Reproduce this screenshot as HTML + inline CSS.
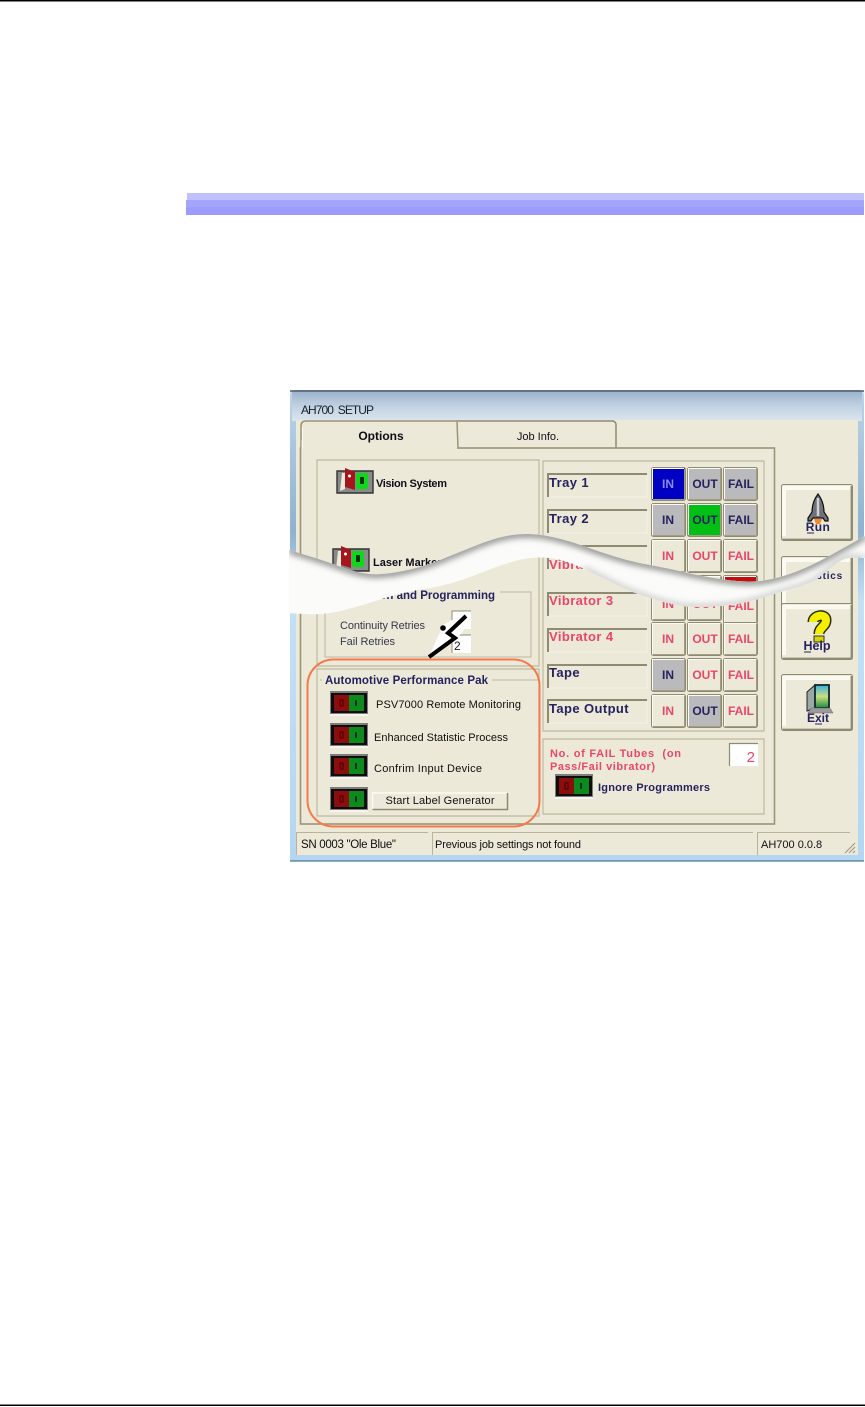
<!DOCTYPE html>
<html><head><meta charset="utf-8"><style>
html,body{margin:0;padding:0;background:#fff;width:865px;height:1407px;overflow:hidden}
svg{position:absolute;left:0;top:0;display:block}
text{font-family:"Liberation Sans",sans-serif}
.n{font-weight:bold;fill:#25225e}
.r{font-weight:bold;fill:#e8466a}
.c{text-anchor:middle;font-weight:bold;font-size:12px}
.t{font-size:11px;fill:#111}
</style></head><body>
<svg width="865" height="1407" viewBox="0 0 865 1407" xmlns="http://www.w3.org/2000/svg">
<defs>
<linearGradient id="tb" x1="0" y1="0" x2="0" y2="1"><stop offset="0" stop-color="#9cb4cf"/><stop offset=".5" stop-color="#c3d2e2"/><stop offset="1" stop-color="#dbe5ee"/></linearGradient>
<linearGradient id="sd" x1="0" y1="0" x2="0" y2="1"><stop offset="0" stop-color="#bcd3e8"/><stop offset=".3" stop-color="#8fb2cf"/><stop offset=".45" stop-color="#c4e0f4"/><stop offset="1" stop-color="#b4d6f2"/></linearGradient>
<linearGradient id="dr" x1="0" y1="0" x2="0" y2="1"><stop offset="0" stop-color="#3ab0e0"/><stop offset=".5" stop-color="#c8e080"/><stop offset="1" stop-color="#1f8a40"/></linearGradient>
<g id="b"><rect x=".5" y=".5" width="34" height="33" rx="2" stroke="#8f8a72" stroke-width="1"/><path d="M1.5 32V1.5H33" fill="none" stroke="#fbfaf4" stroke-width="1"/><path d="M2 32.5H33.5V2" fill="none" stroke="#a39d84" stroke-width="1"/></g>
<g id="big"><rect x=".5" y=".5" width="71" height="56" rx="2" fill="#ece9d8" stroke="#8f8a72"/><path d="M3 52V4H69" fill="none" stroke="#faf9f2" stroke-width="4"/><path d="M1.500 55.500H70.500V2" fill="none" stroke="#8f8a72" stroke-width="1.800"/></g>
<g id="lab"><path d="M1 24V1H100" fill="none" stroke="#8f8a72" stroke-width="2"/><path d="M2 24H100V3" fill="none" stroke="#f4f2e8" stroke-width="1"/></g>
<g id="tog"><rect x="0" y="-1" width="38" height="23" fill="#7d7d7d"/><rect x="1" y="1" width="36" height="20" fill="#111"/><rect x="4" y="3" width="15" height="16" fill="#8c0e0e"/><rect x="19" y="3" width="15" height="16" fill="#0b8a1e"/><rect x="10" y="8" width="3" height="6" fill="none" stroke="#4a0505"/><rect x="25" y="8" width="2" height="6" fill="#033"/><path d="M0 23H38" stroke="#fff"/></g>
<g id="togo"><path d="M0 2H36V24H0Z" fill="#8a8a8a" stroke="#333" stroke-width="1.400"/><path d="M3 22L5 4H8V20Z" fill="#ece9d8"/><path d="M8 -1L18 3V21L8 18Z" fill="#a5141c"/><circle cx="12.500" cy="7" r="1.500" fill="#fff"/><rect x="19" y="4" width="12" height="16" fill="#0bd81e"/><rect x="23" y="8" width="4" height="7" fill="#030"/></g>
<clipPath id="wc"><path id="wp" d="M289 550Q323 560 340 566.500Q357 573 370 574Q383 575 403 571Q423 567 440 560Q457 553 478.500 544.500Q500 536 516.500 534.500Q533 533 550 536.500Q567 540 583.500 546Q600 552 616.500 557Q633 562 650 565Q667 568 683.500 572Q700 576 723.500 579.500Q747 583 763.500 580.500Q780 578 796.500 571.500Q813 565 830 555.500Q847 546 865 536L865 558Q847 556 838.500 562Q830 568 821.500 575.500Q813 583 796.500 587.500Q780 592 763.500 597.500Q747 603 730 605Q713 607 696.500 607Q680 607 656.500 600Q633 593 616.500 585Q600 577 583.500 568.500Q567 560 550 558Q533 556 516.500 560.500Q500 565 475 575Q450 585 426.500 588.500Q403 592 380 599.500Q357 607 340 611Q323 615 306 614L289 613Z"/></clipPath>
<clipPath id="dg"><rect x="813" y="560" width="35" height="30"/></clipPath>
<filter id="bl" x="-10%" y="-30%" width="120%" height="160%"><feGaussianBlur stdDeviation="3.500"/></filter>
<filter id="sf"><feGaussianBlur stdDeviation=".28"/></filter>
</defs>
<rect width="865" height="1407" fill="#fff"/>
<rect x="0" y="0" width="865" height="1.500" fill="#000"/>
<rect x="0" y="1404.500" width="865" height="1.500" fill="#000"/>
<rect x="187" y="193" width="677" height="7" fill="#c0c0ff"/>
<rect x="186" y="200" width="678" height="7" fill="#a4a4fb"/>
<rect x="186" y="207" width="678" height="8" fill="#9c9cff"/>

<g filter="url(#sf)">
<path d="M290 861V395Q290 390 295 390H859Q864 390 864 395V861Z" fill="url(#sd)"/>
<path d="M290 391H864" stroke="#2c3a44" stroke-width="1.300"/>
<path d="M290 861H864" stroke="#1c5f70" stroke-width="1"/>
<rect x="292" y="392" width="570" height="29" fill="url(#tb)"/>
<text x="301" y="414" font-size="12" fill="#14202c" textLength="73" xml:space="preserve">AH700  SETUP</text>
<rect x="296" y="420" width="562" height="435" fill="#ece9d8"/>

<path d="M457 448V421H612Q616 421 616 425V448" fill="#ece9d8" stroke="#8f8a72" stroke-width="1.500"/>
<rect x="300.500" y="448" width="474" height="376" fill="#ece9d8" stroke="#9a9478" stroke-width="1.600"/>
<path d="M301 448V426Q301 421 306 421H458V448" fill="#ece9d8"/>
<path d="M301 448V426Q301 421 306 421H457L458 448" fill="none" stroke="#9a9478" stroke-width="1.500"/>
<rect x="301.500" y="440" width="155.500" height="12" fill="#ece9d8"/>
<path d="M302.500 449V427" stroke="#f9f8f0"/>
<text x="381" y="440" text-anchor="middle" font-size="12" font-weight="bold" fill="#111118">Options</text>
<text x="538" y="440" text-anchor="middle" font-size="11" fill="#111118">Job Info.</text>

<path d="M317 666V460H539V666Z" fill="none" stroke="#bdb89e" stroke-width="1.200"/>
<path d="M543 731V461H764V731Z" fill="none" stroke="#bdb89e" stroke-width="1.200"/>
<path d="M543 814V739H764V814Z" fill="none" stroke="#bdb89e" stroke-width="1.200"/>
<path d="M317 816V669H539V816Z" fill="none" stroke="#bdb89e" stroke-width="1.200"/>

<use href="#togo" x="337" y="469"/>
<text x="376" y="487" font-size="11" class="n" style="fill:#10101c" textLength="71">Vision System</text>
<use href="#togo" x="333" y="547"/>
<text x="373" y="566" font-size="11" class="n" style="fill:#10101c">Laser Marker</text>

<rect x="325" y="592" width="206" height="65" fill="none" stroke="#bdb89e"/>
<rect x="400" y="588" width="100" height="10" fill="#ece9d8"/>
<text x="495" y="599" text-anchor="end" font-size="11.500" class="n">Vision and Programming</text>
<text x="340" y="629" font-size="11" fill="#38374e" textLength="85">Continuity Retries</text>
<text x="340" y="645" font-size="11" fill="#38374e" textLength="55">Fail Retries</text>
<rect x="452" y="611" width="19" height="18" fill="#fff"/><path d="M452 629V611H471" fill="none" stroke="#8f8a72"/>
<rect x="452" y="635" width="19" height="18" fill="#fff"/><path d="M452 653V635H471" fill="none" stroke="#8f8a72"/>
<text x="454" y="626" font-size="12" fill="#333">1</text>
<text x="454" y="650" font-size="12" fill="#222">2</text>

<path d="M429 657L443 625L468 611L470 622L456 640Z" fill="#fff"/>
<path d="M429 657L455 638L448 633L466 616" fill="none" stroke="#000" stroke-width="4"/>
<circle cx="443" cy="628" r="2.800" fill="#000"/>

<path d="M320 680H538" stroke="#bdb89e"/>
<rect x="322" y="672" width="170" height="14" fill="#ece9d8"/>
<text x="325" y="684" font-size="11.500" class="n" textLength="163">Automotive Performance Pak</text>
<use href="#tog" x="330" y="692"/>
<use href="#tog" x="330" y="724"/>
<use href="#tog" x="330" y="755"/>
<use href="#tog" x="330" y="788"/>
<text x="376" y="708" class="t" textLength="145">PSV7000 Remote Monitoring</text>
<text x="374" y="741" class="t" textLength="134">Enhanced Statistic Process</text>
<text x="374" y="772" class="t" textLength="108">Confrim Input Device</text>
<rect x="372.500" y="793" width="135" height="16.500" fill="#ece9d8"/>
<path d="M372.500 809V793H507" fill="none" stroke="#fbfaf4" stroke-width="1.500"/>
<path d="M372.500 809.500H507.500V793" fill="none" stroke="#8f8a72" stroke-width="1.500"/>
<text x="440" y="804" text-anchor="middle" font-size="11" fill="#111" textLength="109">Start Label Generator</text>
<rect x="307.500" y="659.500" width="232" height="167" rx="26" fill="none" stroke="#f47a4c" stroke-width="2"/>

<use href="#lab" x="547" y="473"/><text x="549" y="487" font-size="13" class="n" letter-spacing=".4">Tray 1</text>
<use href="#lab" x="547" y="509"/><text x="549" y="523" font-size="13" class="n" letter-spacing=".4">Tray 2</text>
<use href="#lab" x="547" y="545"/><text x="549" y="569" font-size="13" class="r" letter-spacing=".4">Vibrator 1</text>
<use href="#lab" x="547" y="592"/><text x="549" y="605" font-size="13" class="r" letter-spacing=".4">Vibrator 3</text>
<use href="#lab" x="547" y="628"/><text x="549" y="641" font-size="13" class="r" letter-spacing=".4">Vibrator 4</text>
<use href="#lab" x="547" y="664"/><text x="549" y="677" font-size="13" class="n" letter-spacing=".4">Tape</text>
<use href="#lab" x="547" y="699"/><text x="549" y="713" font-size="13" class="n" letter-spacing=".4">Tape Output</text>

<use href="#b" x="651" y="467" fill="#0000c4"/><use href="#b" x="687" y="467" fill="#bababc"/><use href="#b" x="723" y="467" fill="#bababc"/>
<text x="668" y="488" class="c" style="fill:#8c8ce0">IN</text><text x="705" y="488" class="c" style="fill:#25225e">OUT</text><text x="741" y="488" class="c" style="fill:#25225e">FAIL</text>
<use href="#b" x="651" y="503" fill="#bababc"/><use href="#b" x="687" y="503" fill="#06c014"/><use href="#b" x="723" y="503" fill="#bababc"/>
<text x="668" y="524" class="c" style="fill:#25225e">IN</text><text x="705" y="524" class="c" style="fill:#25225e">OUT</text><text x="741" y="524" class="c" style="fill:#25225e">FAIL</text>
<use href="#b" x="651" y="539" fill="#ece9d8"/><use href="#b" x="687" y="539" fill="#ece9d8"/><use href="#b" x="723" y="539" fill="#ece9d8"/>
<text x="668" y="560" class="c r">IN</text><text x="705" y="560" class="c r">OUT</text><text x="741" y="560" class="c r">FAIL</text>
<use href="#b" x="651" y="575" fill="#ece9d8"/><use href="#b" x="687" y="575" fill="#ece9d8"/><use href="#b" x="723" y="575" fill="#c00808"/>
<use href="#b" x="651" y="587" fill="#ece9d8"/><use href="#b" x="687" y="587" fill="#ece9d8"/><use href="#b" x="723" y="590" fill="#ece9d8"/>
<text x="668" y="608" class="c r">IN</text><text x="705" y="608" class="c r">OUT</text><text x="741" y="610" class="c r">FAIL</text>
<use href="#b" x="651" y="622" fill="#ece9d8"/><use href="#b" x="687" y="622" fill="#ece9d8"/><use href="#b" x="723" y="622" fill="#ece9d8"/>
<text x="668" y="643" class="c r">IN</text><text x="705" y="643" class="c r">OUT</text><text x="741" y="643" class="c r">FAIL</text>
<use href="#b" x="651" y="658" fill="#bababc"/><use href="#b" x="687" y="658" fill="#ece9d8"/><use href="#b" x="723" y="658" fill="#ece9d8"/>
<text x="668" y="679" class="c" style="fill:#25225e">IN</text><text x="705" y="679" class="c r">OUT</text><text x="741" y="679" class="c r">FAIL</text>
<use href="#b" x="651" y="694" fill="#ece9d8"/><use href="#b" x="687" y="694" fill="#bababc"/><use href="#b" x="723" y="694" fill="#ece9d8"/>
<text x="668" y="715" class="c r">IN</text><text x="705" y="715" class="c" style="fill:#25225e">OUT</text><text x="741" y="715" class="c r">FAIL</text>

<text x="550" y="757" font-size="11" class="r" textLength="131" xml:space="preserve">No. of FAIL Tubes  (on</text>
<text x="550" y="770" font-size="11" class="r" textLength="105">Pass/Fail vibrator)</text>
<rect x="729" y="743" width="29" height="23" fill="#fff"/><path d="M729.500 766V743.500H758" fill="none" stroke="#8f8a72" stroke-width="1.200"/>
<text x="755" y="762" text-anchor="end" font-size="15" fill="#e8466a">2</text>
<use href="#tog" x="555" y="775"/>
<text x="598" y="791" font-size="11" class="n" textLength="112">Ignore Programmers</text>

<use href="#big" x="781" y="484"/>
<path d="M818 494C815 498 812 504 812 512L808 518V521H811L813 518H823L825 521H828V518L824 512C824 504 821 498 818 494Z" fill="#6f6f78" stroke="#111" stroke-width="1.200"/>
<path d="M818 498V516" stroke="#d0d0d6" stroke-width="2.500"/>
<path d="M814 519H822L820 524H816Z" fill="#f08a20"/>
<text x="818" y="531" text-anchor="middle" font-size="12" class="n" letter-spacing=".4">Run</text>
<path d="M807 533H814" stroke="#25225e"/>

<use href="#big" x="781" y="556"/>
<g clip-path="url(#dg)"><text x="843" y="579" text-anchor="end" font-size="10" class="n" letter-spacing=".8">Diagnostics</text></g>

<use href="#big" x="781" y="603"/>
<path d="M813 622C813 615 826 613 826 620C826 627 819 627 819 634" fill="none" stroke="#2a2a10" stroke-width="11"/>
<path d="M813 622C813 615 826 613 826 620C826 627 819 627 819 634" fill="none" stroke="#f4f000" stroke-width="8"/>
<rect x="814" y="636" width="10" height="6" fill="#d8d400" stroke="#333"/>
<text x="817" y="650" text-anchor="middle" font-size="12.500" class="n">Help</text>
<path d="M804 652H811" stroke="#25225e"/>

<use href="#big" x="781" y="674"/>
<path d="M807 692L815 685V708L807 711Z" fill="#9aa8a8" stroke="#222"/>
<rect x="815" y="685" width="14" height="23" fill="url(#dr)" stroke="#102a2a" stroke-width="1.800"/>
<path d="M811 708H830L833 713H808Z" fill="#9a9a9a" stroke="#666" stroke-width=".5"/>
<text x="818" y="722" text-anchor="middle" font-size="12" class="n">Exit</text>
<path d="M815 724H822" stroke="#25225e"/>

<path d="M296.500 855V832.500H428M432.500 855V832.500H753M757.500 855V832.500H850" fill="none" stroke="#b8b39a" stroke-width="1"/>
<text x="301" y="848" font-size="11.500" fill="#111" textLength="95">SN 0003 "Ole Blue"</text>
<text x="435" y="848" font-size="11" fill="#111" textLength="146">Previous job settings not found</text>
<text x="761" y="848" font-size="11" fill="#111">AH700 0.0.8</text>
<path d="M845 853L855 843M849 853L855 847M853 853L855 851" stroke="#9a9684" stroke-width="1"/>
</g>

<use href="#wp" fill="#fff"/>
<g clip-path="url(#wc)">
<rect x="285" y="525" width="585" height="100" fill="#fbfbf9"/>
<path d="M289 550Q323 560 340 566.500Q357 573 370 574Q383 575 403 571Q423 567 440 560Q457 553 478.500 544.500Q500 536 516.500 534.500Q533 533 550 536.500Q567 540 583.500 546Q600 552 616.500 557Q633 562 650 565Q667 568 683.500 572Q700 576 723.500 579.500Q747 583 763.500 580.500Q780 578 796.500 571.500Q813 565 830 555.500Q847 546 865 536" fill="none" stroke="#7c7c7c" stroke-width="6" filter="url(#bl)"/>
<path d="M865 558Q847 556 838.500 562Q830 568 821.500 575.500Q813 583 796.500 587.500Q780 592 763.500 597.500Q747 603 730 605Q713 607 696.500 607Q680 607 656.500 600Q633 593 616.500 585Q600 577 583.500 568.500" fill="none" stroke="#b8b8b8" stroke-width="4" filter="url(#bl)"/>
</g>
</svg>
</body></html>
